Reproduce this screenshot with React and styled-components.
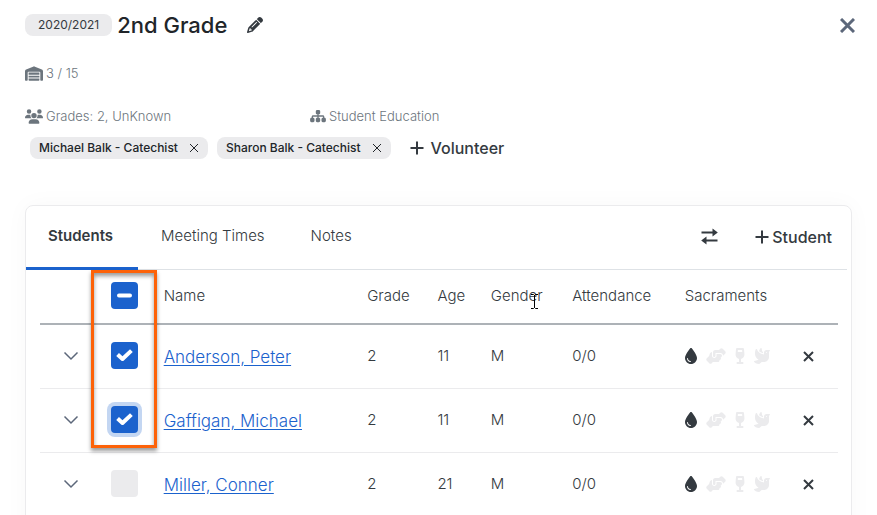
import React, { useEffect, useRef, useState } from 'react';
import styled, { createGlobalStyle, css } from 'styled-components';
import {
  FaWarehouse,
  FaUsers,
  FaSitemap,
  FaPencil,
  FaDroplet,
  FaHandshakeAngle,
  FaWineGlass,
  FaDove,
} from 'react-icons/fa6';

const GlobalStyle = createGlobalStyle`
  * {
    box-sizing: border-box;
  }
  body {
    margin: 0;
    background: #fff;
    color: #343a40;
    font-family: Inter, 'Noto Sans', sans-serif;
    font-size: 15px;
    font-weight: 300;
    line-height: 24px;
    overflow: hidden;
  }
  button {
    padding: 0;
    border: 0;
    background: none;
    color: inherit;
    font: inherit;
    cursor: pointer;
  }
`;

const S = {
  Page: styled.main`
    padding: 8px 25px 0;
  `,
  Header: styled.header`
    display: flex;
    align-items: center;
    height: 34px;
  `,
  Year: styled.span`
    padding: 0 13px;
    border-radius: 8px;
    background: #ebebed;
    font-size: 12px;
    font-weight: 400;
    line-height: 22px;
  `,
  Title: styled.h1`
    margin: 0 20px 0 5px;
    color: #212529;
    font-size: 22px;
    font-weight: 500;
    line-height: 32px;
  `,
  IconButton: styled.button`
    display: flex;
    align-items: center;
    justify-content: center;
    font-size: 16px;
  `,
  Close: styled.button`
    display: flex;
    margin-left: auto;
    margin-right: -3px;
    color: #5c677a;
  `,
  Facts: styled.div`
    display: grid;
    grid-template-columns: 285px 1fr;
    margin-top: 19px;
    color: #6c757d;
    font-size: 13px;
  `,
  Fact: styled.div`
    display: flex;
    align-items: center;
    gap: 3px;
  `,
  Icon: styled.span`
    display: flex;

    svg {
      width: ${({ $width }) => $width}px;
      height: ${({ $height }) => $height || 16}px;
    }
  `,
  Chips: styled.div`
    display: flex;
    align-items: center;
    gap: 9px;
    margin-top: 8px;
    padding-left: 5px;
  `,
  Chip: styled.span`
    display: flex;
    align-items: center;
    gap: 11px;
    padding: 0 9px;
    border-radius: 8px;
    background: #ebebed;
    color: #212529;
    font-size: 12px;
    font-weight: 500;
    line-height: 22px;
  `,
  AddVolunteer: styled.button`
    display: flex;
    align-items: center;
    gap: 7px;
    margin-left: 10px;
    font-size: 16px;
    font-weight: 500;
  `,
  Card: styled.section`
    margin-top: 45px;
    padding-bottom: 24px;
    border: 1px solid #ebebed;
    border-radius: 8px;
    box-shadow: 0 0 24px rgba(0, 0, 0, 0.03);
  `,
  Tabs: styled.nav`
    display: flex;
    height: 64px;
    margin-right: 4px;
    border-bottom: 1px solid #dee2e6;
  `,
  Tab: styled.button`
    height: 64px;
    padding: 0 23px 2px;
    border-bottom: 3px solid transparent;

    ${({ $active }) => $active && css`
      padding: 0 25px 2px 22px;
      border-color: #1b62cd;
      font-weight: 600;
    `}
  `,
  Actions: styled.div`
    display: flex;
    align-items: center;
    gap: 37px;
    margin-left: auto;
    padding: 0 15px 2px 0;
  `,
  AddStudent: styled.button`
    display: flex;
    align-items: center;
    gap: 3px;
    font-size: 16px;
    font-weight: 500;
  `,
  TableWrap: styled.div`
    position: relative;
    padding: 0 13px 0 14px;
  `,
  Table: styled.table`
    width: 100%;
    border-collapse: collapse;
    table-layout: fixed;

    th,
    td {
      height: 64px;
      padding: 0;
      border-bottom: 1px solid #ebebed;
      text-align: left;
      font-weight: 300;
    }
    th {
      height: 54px;
      padding-bottom: 2px;
      border-bottom: 2px solid #adb2b7;
    }
    tbody tr:last-child td {
      border-bottom: 0;
    }
  `,
  Expand: styled.button`
    display: flex;
    margin-left: 23px;
    color: #5c677a;
  `,
  Check: styled.span`
    display: grid;
    width: 27px;
    height: 27px;

    td & {
      margin-bottom: 2px;
    }
    > * {
      grid-area: 1 / 1;
    }
    svg {
      place-self: center;
      pointer-events: none;
    }
  `,
  CheckInput: styled.input`
    appearance: none;
    width: 27px;
    height: 27px;
    margin: 0;
    border-radius: 4px;
    background: #ebebed;
    outline: none;

    &:checked,
    &:indeterminate {
      background: #1b62cd;
    }
    &:focus {
      box-shadow: 0 0 0 4px #c3d6f2;
    }
  `,
  StudentLink: styled.a`
    display: inline-block;
    padding-top: 2px;
    color: #1b62cd;
    font-size: 17px;
    text-underline-offset: 2px;
  `,
  Sacraments: styled.div`
    display: flex;
    align-items: center;
    gap: 9px;
    color: #ebebed;

    > :first-child {
      color: #343a40;
    }
  `,
  Highlight: styled.div`
    position: absolute;
    top: 0;
    left: 65px;
    width: 66px;
    height: 178px;
    border: 3px solid #fd6208;
    box-shadow: 0 3px 4px rgba(0, 0, 0, 0.4), inset 0 3px 4px rgba(0, 0, 0, 0.4);
    pointer-events: none;
  `,
  Gender: styled.span`
    position: relative;
  `,
  Cursor: styled.svg`
    position: absolute;
    right: 5px;
    top: 8px;
  `,
};

const Cross = ({ size, stroke = 2 }) => (
  <svg width={size} height={size} viewBox={`0 0 ${size} ${size}`} stroke="currentColor" strokeWidth={stroke} aria-hidden="true">
    <path d={`M1 1L${size - 1} ${size - 1}M${size - 1} 1L1 ${size - 1}`} />
  </svg>
);

const Plus = () => (
  <svg width="14" height="14" viewBox="0 0 14 14" stroke="currentColor" strokeWidth="2" aria-hidden="true">
    <path d="M7 0.5V13.5M0.5 7H13.5" />
  </svg>
);

const Swap = () => (
  <svg width="17" height="17" viewBox="0 0 17 17" fill="currentColor" aria-hidden="true">
    <path d="M0.5 3.5H11.5V0.5L16.8 4.5L11.5 8.5V5.5H0.5ZM16.5 11.5H5.5V8.5L0.2 12.5L5.5 16.5V13.5H16.5Z" />
  </svg>
);

const Chevron = () => (
  <svg width="16" height="10" viewBox="0 0 16 10" fill="none" stroke="currentColor" strokeWidth="1.5" aria-hidden="true">
    <path d="M1.5 1.5L8 8L14.5 1.5" />
  </svg>
);

const volunteers = ['Michael Balk - Catechist', 'Sharon Balk - Catechist'];

const students = [
  { id: 1, name: 'Anderson, Peter', grade: 2, age: 11, gender: 'M', attendance: '0/0' },
  { id: 2, name: 'Gaffigan, Michael', grade: 2, age: 11, gender: 'M', attendance: '0/0' },
  { id: 3, name: 'Miller, Conner', grade: 2, age: 21, gender: 'M', attendance: '0/0' },
];

const tabs = ['Students', 'Meeting Times', 'Notes'];

// column widths in percent
const columns = [8.9, 6.6, 25.5, 8.8, 6.7, 10.2, 14.1, 14.8, 4.4];

const Checkbox = ({ label, checked, mixed, autoFocus, onChange }) => {
  const ref = useRef(null);

  useEffect(() => {
    ref.current.indeterminate = Boolean(mixed);
  }, [mixed]);

  return (
    <S.Check>
      <S.CheckInput ref={ref} type="checkbox" aria-label={label} checked={checked} autoFocus={autoFocus} onChange={onChange} />
      {mixed ? (
        <svg width="15" height="5" viewBox="0 0 15 5" aria-hidden="true">
          <rect width="15" height="4" y="0.5" rx="2" fill="#fff" />
        </svg>
      ) : checked && (
        <svg width="17" height="13" viewBox="0 0 17 13" fill="none" stroke="#fff" strokeWidth="4" strokeLinejoin="round" aria-hidden="true">
          <path d="M1.6 5.5L6.5 10L15.4 1.6" />
        </svg>
      )}
    </S.Check>
  );
};

const App = () => {
  const [tab, setTab] = useState('Students');
  const [selected, setSelected] = useState([1, 2]);

  const toggle = (id) => {
    setSelected((prev) => (prev.includes(id) ? prev.filter((item) => item !== id) : [...prev, id]));
  };

  const all = selected.length === students.length;

  return (
    <S.Page>
      <GlobalStyle />
      <S.Header>
        <S.Year>2020/2021</S.Year>
        <S.Title>2nd Grade</S.Title>
        <S.IconButton aria-label="Edit class"><FaPencil /></S.IconButton>
        <S.Close aria-label="Close"><Cross size={15} stroke={3} /></S.Close>
      </S.Header>

      <S.Facts>
        <S.Fact><S.Icon $width={18} $height={15}><FaWarehouse /></S.Icon>3 / 15</S.Fact>
      </S.Facts>
      <S.Facts>
        <S.Fact><S.Icon $width={18} $height={15}><FaUsers /></S.Icon>Grades: 2, UnKnown</S.Fact>
        <S.Fact><S.Icon $width={16} $height={14}><FaSitemap /></S.Icon>Student Education</S.Fact>
      </S.Facts>

      <S.Chips>
        {volunteers.map((name) => (
          <S.Chip key={name}>
            {name}
            <S.IconButton aria-label={`Remove ${name}`}><Cross size={10} stroke={1} /></S.IconButton>
          </S.Chip>
        ))}
        <S.AddVolunteer><Plus />Volunteer</S.AddVolunteer>
      </S.Chips>

      <S.Card>
        <S.Tabs>
          {tabs.map((name) => (
            <S.Tab key={name} $active={tab === name} onClick={() => setTab(name)}>{name}</S.Tab>
          ))}
          <S.Actions>
            <S.IconButton aria-label="Transfer students"><Swap /></S.IconButton>
            <S.AddStudent><Plus />Student</S.AddStudent>
          </S.Actions>
        </S.Tabs>

        <S.TableWrap>
          <S.Table>
            <colgroup>
              {columns.map((width, key) => <col key={key} style={{ width: `${width}%` }} />)}
            </colgroup>
            <thead>
              <tr>
                <th />
                <th>
                  <Checkbox
                    label="Select all"
                    checked={all}
                    mixed={selected.length > 0 && !all}
                    onChange={() => setSelected(all ? [] : students.map(({ id }) => id))}
                  />
                </th>
                <th>Name</th>
                <th>Grade</th>
                <th>Age</th>
                <th>
                  <S.Gender>
                    Gender
                    <S.Cursor width="7" height="15" viewBox="0 0 7 15" fill="none" stroke="#000" aria-hidden="true">
                      <path d="M0 0.5H2.5L3.5 1.5L4.5 0.5H7M3.5 1V14M0 14.5H2.5L3.5 13.5L4.5 14.5H7" />
                    </S.Cursor>
                  </S.Gender>
                </th>
                <th>Attendance</th>
                <th>Sacraments</th>
                <th />
              </tr>
            </thead>
            <tbody>
              {students.map(({ id, name, grade, age, gender, attendance }) => (
                <tr key={id}>
                  <td><S.Expand aria-label={`Expand ${name}`}><Chevron /></S.Expand></td>
                  <td>
                    <Checkbox
                      label={`Select ${name}`}
                      checked={selected.includes(id)}
                      autoFocus={id === 2}
                      onChange={() => toggle(id)}
                    />
                  </td>
                  <td><S.StudentLink href="#student">{name}</S.StudentLink></td>
                  <td>{grade}</td>
                  <td>{age}</td>
                  <td>{gender}</td>
                  <td>{attendance}</td>
                  <td>
                    <S.Sacraments>
                      <S.Icon $width={12}><FaDroplet /></S.Icon>
                      <S.Icon $width={20}><FaHandshakeAngle /></S.Icon>
                      <S.Icon $width={10}><FaWineGlass /></S.Icon>
                      <S.Icon $width={16}><FaDove /></S.Icon>
                    </S.Sacraments>
                  </td>
                  <td><S.IconButton aria-label={`Remove ${name}`}><Cross size={11} /></S.IconButton></td>
                </tr>
              ))}
            </tbody>
          </S.Table>
          <S.Highlight />
        </S.TableWrap>
      </S.Card>
    </S.Page>
  );
};

export default App;
